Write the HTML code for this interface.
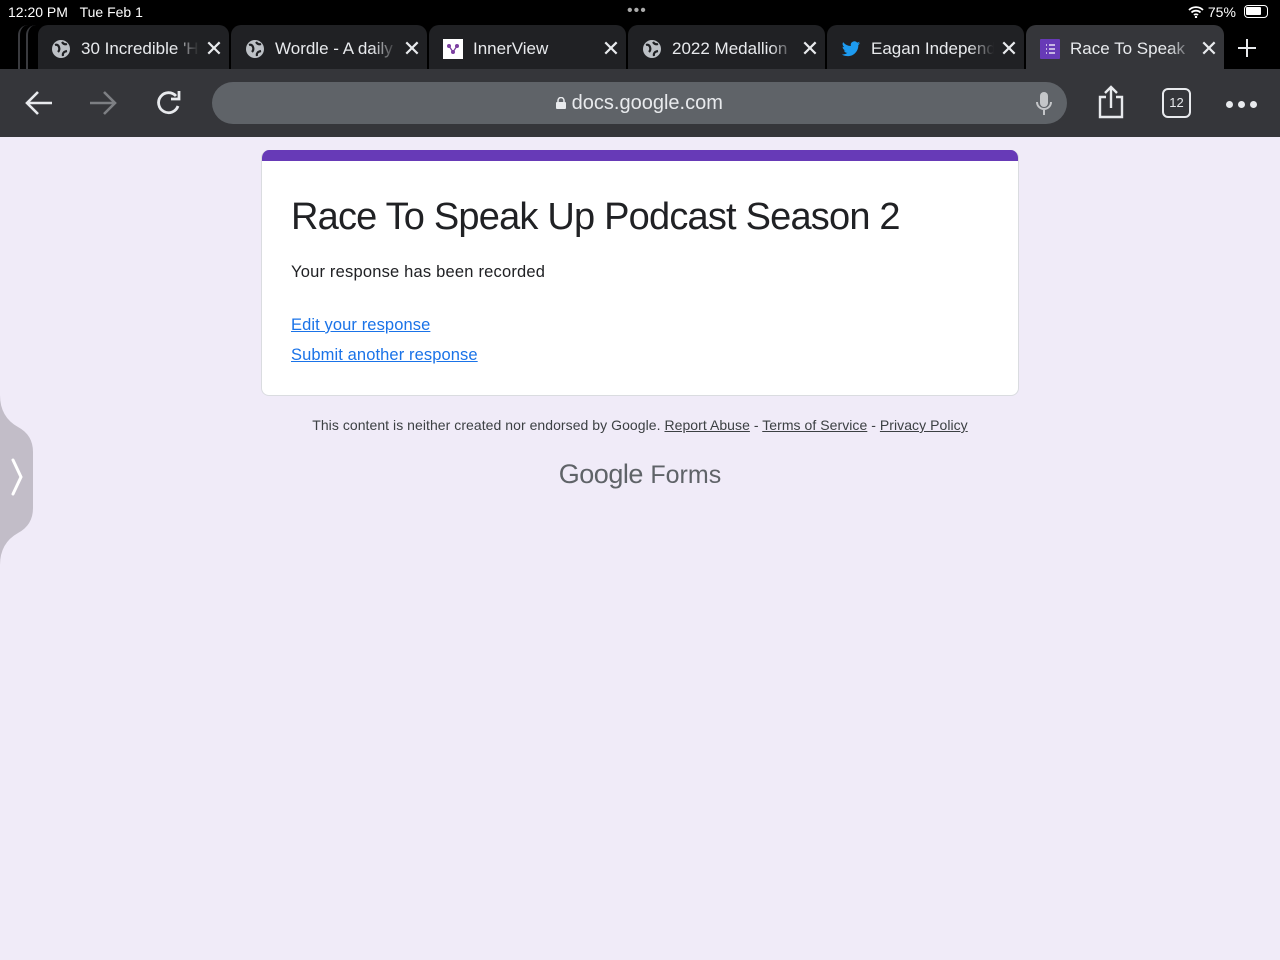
<!DOCTYPE html>
<html><head><meta charset="utf-8"><style>
*{margin:0;padding:0;box-sizing:border-box}
body{width:1280px;height:960px;overflow:hidden;background:#f0ebf8;font-family:"Liberation Sans",Arial,sans-serif;position:relative}
.status{position:absolute;left:0;top:0;width:1280px;height:25px;background:#000;color:#fff;font-size:14px}
.tabs{position:absolute;left:0;top:25px;width:1280px;height:44px;background:#000}
.tab{position:absolute;top:0;height:44px;background:#202124;border-radius:10px 10px 0 0;color:#e8eaed;font-size:17px;display:flex;align-items:center;padding-left:14px;padding-top:4px;overflow:hidden;white-space:nowrap}
.tab .t{flex:1;overflow:hidden;-webkit-mask-image:linear-gradient(90deg,#000 80%,transparent);mask-image:linear-gradient(90deg,#000 80%,transparent)}
.tab .x{width:30px;font-size:22px;color:#e8eaed;text-align:center}
.tab.act{background:#35363a}
.ic{width:20px;height:20px;margin-right:10px;flex:none}
.toolbar{position:absolute;left:0;top:69px;width:1280px;height:68px;background:#35363a}
.url{position:absolute;left:212px;top:13px;width:855px;height:42px;border-radius:21px;background:#5f6368;color:#e8eaed;font-size:20px;text-align:center;line-height:42px}
.card{position:absolute;left:261px;top:150px;width:758px;height:246px;background:#fff;border-radius:8px;border:1px solid #dadce0;border-top:none;overflow:hidden}
.card .bar{height:11px;background:#673ab7}
h1{position:absolute;left:29px;top:46px;font-weight:400;font-size:38px;color:#202124;letter-spacing:-.8px}
.rec{position:absolute;left:29px;top:113px;font-size:16.5px;color:#202124;letter-spacing:.2px}
.card a{position:absolute;left:29px;font-size:16.5px;color:#1a73e8;text-decoration:underline;letter-spacing:.1px}
.foot{position:absolute;left:0;width:1280px;top:417px;text-align:center;font-size:14px;color:#3c4043;letter-spacing:.05px}
.foot u{color:#3c4043}
.gf{position:absolute;left:0;width:1280px;top:459px;text-align:center;font-size:27px;color:#5f6368}
</style></head><body>
<div class="status">
<span style="position:absolute;left:8px;top:4px">12:20 PM&nbsp;&nbsp;&nbsp;Tue Feb 1</span>
<span style="position:absolute;left:627px;top:2px;font-size:16px;letter-spacing:1px;color:#aaa">•••</span>
<span style="position:absolute;left:1188px;top:4px">
<svg width="16" height="12" viewBox="0 0 16 12" style="vertical-align:-1px"><path d="M1 4a10 10 0 0 1 14 0M3.5 6.5a6.5 6.5 0 0 1 9 0M6 9a3 3 0 0 1 4 0" stroke="#fff" stroke-width="1.8" fill="none"/><circle cx="8" cy="11" r="1.2" fill="#fff"/></svg> 75%</span>
<span style="position:absolute;left:1244px;top:5px;width:24px;height:13px;border:1.5px solid #fff;border-radius:4px;padding:1px"><span style="display:block;width:15px;height:8px;background:#fff;border-radius:1px"></span></span>
</div>
<div class="tabs">
<div style="position:absolute;left:18px;top:0;width:30px;height:44px;border-left:2px solid #3a3b3f;border-radius:10px 0 0 0"></div>
<div style="position:absolute;left:26px;top:0;width:30px;height:44px;border-left:2px solid #3a3b3f;border-radius:10px 0 0 0"></div>
<div class="tab" style="left:38px;width:191px;padding-left:13px"><svg class="ic" viewBox="0 0 20 20"><circle cx="10" cy="10" r="9" fill="#bdc1c6"/><path d="M4 6q3-1 4 2t-1 5M11 3q2 3 5 2M12 17q-1-4 4-5" stroke="#202124" stroke-width="2.2" fill="none"/></svg><span class="t">30 Incredible 'Harry</span><span class="x">✕</span></div>
<div class="tab" style="left:231px;width:196px"><svg class="ic" viewBox="0 0 20 20"><circle cx="10" cy="10" r="9" fill="#bdc1c6"/><path d="M4 6q3-1 4 2t-1 5M11 3q2 3 5 2M12 17q-1-4 4-5" stroke="#202124" stroke-width="2.2" fill="none"/></svg><span class="t">Wordle - A daily</span><span class="x">✕</span></div>
<div class="tab" style="left:429px;width:197px"><svg class="ic" viewBox="0 0 20 20"><rect width="20" height="20" fill="#fff"/><circle cx="6" cy="7" r="2" fill="#7b3fa0"/><circle cx="14" cy="7" r="2" fill="#7b3fa0"/><circle cx="10" cy="13" r="2" fill="#7b3fa0"/><path d="M6 7l4 6 4-6" stroke="#7b3fa0" stroke-width="1.3" fill="none"/></svg><span class="t" style="-webkit-mask-image:none;mask-image:none">InnerView</span><span class="x">✕</span></div>
<div class="tab" style="left:628px;width:197px"><svg class="ic" viewBox="0 0 20 20"><circle cx="10" cy="10" r="9" fill="#bdc1c6"/><path d="M4 6q3-1 4 2t-1 5M11 3q2 3 5 2M12 17q-1-4 4-5" stroke="#202124" stroke-width="2.2" fill="none"/></svg><span class="t">2022 Medallion</span><span class="x">✕</span></div>
<div class="tab" style="left:827px;width:197px"><svg class="ic" viewBox="0 0 24 24"><path fill="#1d9bf0" d="M23 5a9 9 0 0 1-2.6.7 4.5 4.5 0 0 0 2-2.5 9 9 0 0 1-2.9 1.1 4.5 4.5 0 0 0-7.7 4.1A12.8 12.8 0 0 1 2.5 3.7a4.5 4.5 0 0 0 1.4 6 4.5 4.5 0 0 1-2-.6 4.5 4.5 0 0 0 3.6 4.4 4.5 4.5 0 0 1-2 .1 4.5 4.5 0 0 0 4.2 3.1A9 9 0 0 1 1 18.6 12.8 12.8 0 0 0 8 20.6c8.3 0 12.8-6.9 12.8-12.8v-.6A9 9 0 0 0 23 5z"/></svg><span class="t">Eagan Independent</span><span class="x">✕</span></div>
<div class="tab act" style="left:1026px;width:198px"><svg class="ic" viewBox="0 0 20 20"><rect width="20" height="20" rx="1" fill="#673ab7"/><path d="M6 6h1M9 6h6M6 10h1M9 10h6M6 14h1M9 14h6" stroke="#fff" stroke-width="1.3"/></svg><span class="t">Race To Speak</span><span class="x">✕</span></div>
<svg style="position:absolute;left:1237px;top:13px" width="20" height="20"><path d="M10 1v18M1 10h18" stroke="#e8eaed" stroke-width="2"/></svg>
</div>
<div class="toolbar">
<svg style="position:absolute;left:24px;top:20px" width="30" height="28"><path d="M28 14H3M14 3L3 14l11 11" stroke="#e8eaed" stroke-width="2.6" fill="none"/></svg>
<svg style="position:absolute;left:88px;top:20px" width="30" height="28"><path d="M2 14h25M16 3l11 11-11 11" stroke="#7d7f83" stroke-width="2.6" fill="none"/></svg>
<svg style="position:absolute;left:154px;top:19px" width="30" height="30"><path d="M22 8A10 10 0 1 0 24 18" stroke="#e8eaed" stroke-width="2.8" fill="none"/><path d="M25 3v8h-8" stroke="#e8eaed" stroke-width="2.8" fill="none"/></svg>
<div class="url"><svg width="10" height="12" viewBox="0 0 10 12" style="vertical-align:0"><path d="M2 5V3.5a3 3 0 0 1 6 0V5" stroke="#e8eaed" stroke-width="1.5" fill="none"/><rect y="5" width="10" height="7" rx="1" fill="#e8eaed"/></svg> docs.google.com
<svg style="position:absolute;left:823px;top:9px" width="18" height="26"><rect x="5" y="1" width="8" height="15" rx="4" fill="#c4c6c9"/><path d="M2 11a7 7 0 0 0 14 0M9 18v6" stroke="#c4c6c9" stroke-width="2" fill="none"/></svg></div>
<svg style="position:absolute;left:1097px;top:15px" width="28" height="36"><path d="M9 13H3v20h22V13h-6M14 24V3M8 9l6-6 6 6" stroke="#e8eaed" stroke-width="2.4" fill="none"/></svg>
<div style="position:absolute;left:1162px;top:19px;width:29px;height:30px;border:2.4px solid #e8eaed;border-radius:6px;color:#e8eaed;font-size:13px;text-align:center;line-height:25px">12</div>
<div style="position:absolute;left:1226px;top:26px"><span style="display:inline-block;width:7px;height:7px;border-radius:50%;background:#e8eaed;margin-right:5px"></span><span style="display:inline-block;width:7px;height:7px;border-radius:50%;background:#e8eaed;margin-right:5px"></span><span style="display:inline-block;width:7px;height:7px;border-radius:50%;background:#e8eaed"></span></div>
</div>
<div class="card"><div class="bar"></div>
<h1>Race To Speak Up Podcast Season 2</h1>
<div class="rec">Your response has been recorded</div>
<a style="top:166px">Edit your response</a>
<a style="top:196px">Submit another response</a>
</div>
<div class="foot">This content is neither created nor endorsed by Google. <u>Report Abuse</u> - <u>Terms of Service</u> - <u>Privacy Policy</u></div>
<div class="gf"><span style="letter-spacing:-.5px">Google</span> <span style="font-size:25px">Forms</span></div>
<svg style="position:absolute;left:0;top:395px" width="34" height="170" viewBox="0 0 34 170"><path d="M0 0q0 22 18 32q15 8 15 25v56q0 17-15 25Q0 148 0 170z" fill="#c2bdc8"/><path d="M13 65l8 17-8 17" stroke="#fff" stroke-width="3" stroke-linecap="round" fill="none"/></svg>
</body></html>
